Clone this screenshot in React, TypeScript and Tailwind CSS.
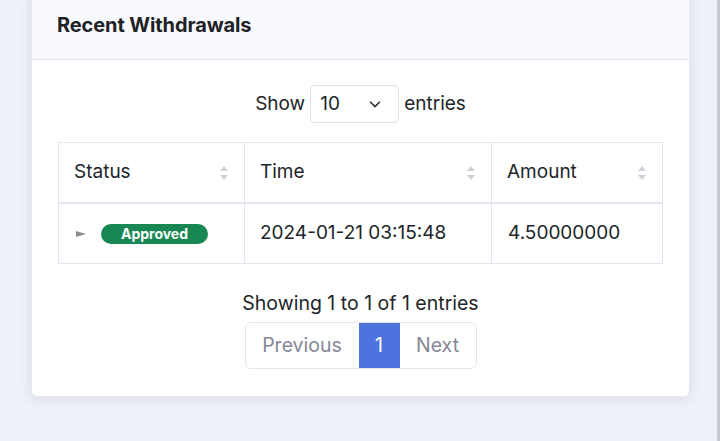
import React from 'react'

const font = { fontFamily: 'Inter, "Noto Sans", sans-serif' }

function SortArrows() {
  return (
    <svg className="w-[8px] h-[14px]" viewBox="0 0 8 14" fill="#cfd1d9">
      <path d="M4 0 L8 5 L0 5 Z" />
      <path d="M0 9 L8 9 L4 14 Z" />
    </svg>
  )
}

function HeaderCell({ label, className }: { label: string; className: string }) {
  return (
    <div className={`flex items-center justify-between pl-[15px] pr-[16px] ${className}`}>
      <span>{label}</span>
      <SortArrows />
    </div>
  )
}

export default function App() {
  return (
    <div className="w-[720px] h-[441px] overflow-hidden bg-[#eff1f9] flex text-[#212529]" style={font}>
      <div className="flex-1 pl-[31px] pr-[27px]">
        <div className="-mt-[10px] w-[659px] bg-white rounded-[6px] shadow-[0_2px_12px_rgba(58,59,69,0.12)] border border-[#e8eaf2] overflow-hidden">
          {/* card header */}
          <div className="h-[69px] flex items-center px-[25px] bg-[#f8f9fc] border-b border-[#e3e6f0]">
            <h6 className="text-[20px] font-bold text-[#1e2125] tracking-[-0.1px]">Recent Withdrawals</h6>
          </div>

          <div className="pt-[25px] pb-[27px] flex flex-col items-center">
            {/* length select */}
            <div className="flex items-center gap-[5px] text-[19px]">
              <span>Show</span>
              <div className="w-[89px] h-[38px] border border-[#dfe1e8] rounded-[5px] flex items-center justify-between pl-[9px] pr-[16px]">
                <span>10</span>
                <svg className="w-[14px] h-[14px]" viewBox="0 0 16 16" fill="none" stroke="#343a40" strokeWidth={2} strokeLinecap="round" strokeLinejoin="round">
                  <path d="M3 6l5 5 5-5" />
                </svg>
              </div>
              <span>entries</span>
            </div>

            {/* table */}
            <div className="mt-[19px] w-[605px] border border-[#e3e6f0] text-[19px]">
              <div className="grid grid-cols-[186px_247px_1fr] h-[61px] border-b-2 border-[#e3e6f0]">
                <HeaderCell label="Status" className="border-r border-[#e3e6f0]" />
                <HeaderCell label="Time" className="border-r border-[#e3e6f0]" />
                <HeaderCell label="Amount" className="" />
              </div>
              <div className="grid grid-cols-[186px_247px_1fr] h-[59px]">
                <div className="flex items-center pl-[17px] border-r border-[#e3e6f0]">
                  <svg className="w-[10px] h-[6px]" viewBox="0 0 10 6" fill="#8a8c94">
                    <path d="M0 0 L10 3 L0 6 Z" />
                  </svg>
                  <span className="ml-[15px] w-[107px] h-[20px] rounded-full bg-[#198754] text-white text-[14px] font-bold flex items-center justify-center">
                    Approved
                  </span>
                </div>
                <div className="flex items-center pl-[15px] border-r border-[#e3e6f0]">2024-01-21 03:15:48</div>
                <div className="flex items-center pl-[16px]">4.50000000</div>
              </div>
            </div>

            {/* info */}
            <div className="mt-[26px] text-[19.5px] leading-[26px]">Showing 1 to 1 of 1 entries</div>

            {/* pagination */}
            <div className="mt-[6px] flex h-[47px] text-[19.5px] border border-[#e3e6f0] rounded-[6px] overflow-hidden">
              <span className="w-[113px] flex items-center justify-center text-[#858796]">Previous</span>
              <span className="w-[41px] flex items-center justify-center bg-[#4e73df] text-white">1</span>
              <span className="w-[76px] flex items-center justify-center text-[#858796]">Next</span>
            </div>
          </div>
        </div>
      </div>
      <div className="w-[3px] bg-[#c9cad2]" />
    </div>
  )
}
